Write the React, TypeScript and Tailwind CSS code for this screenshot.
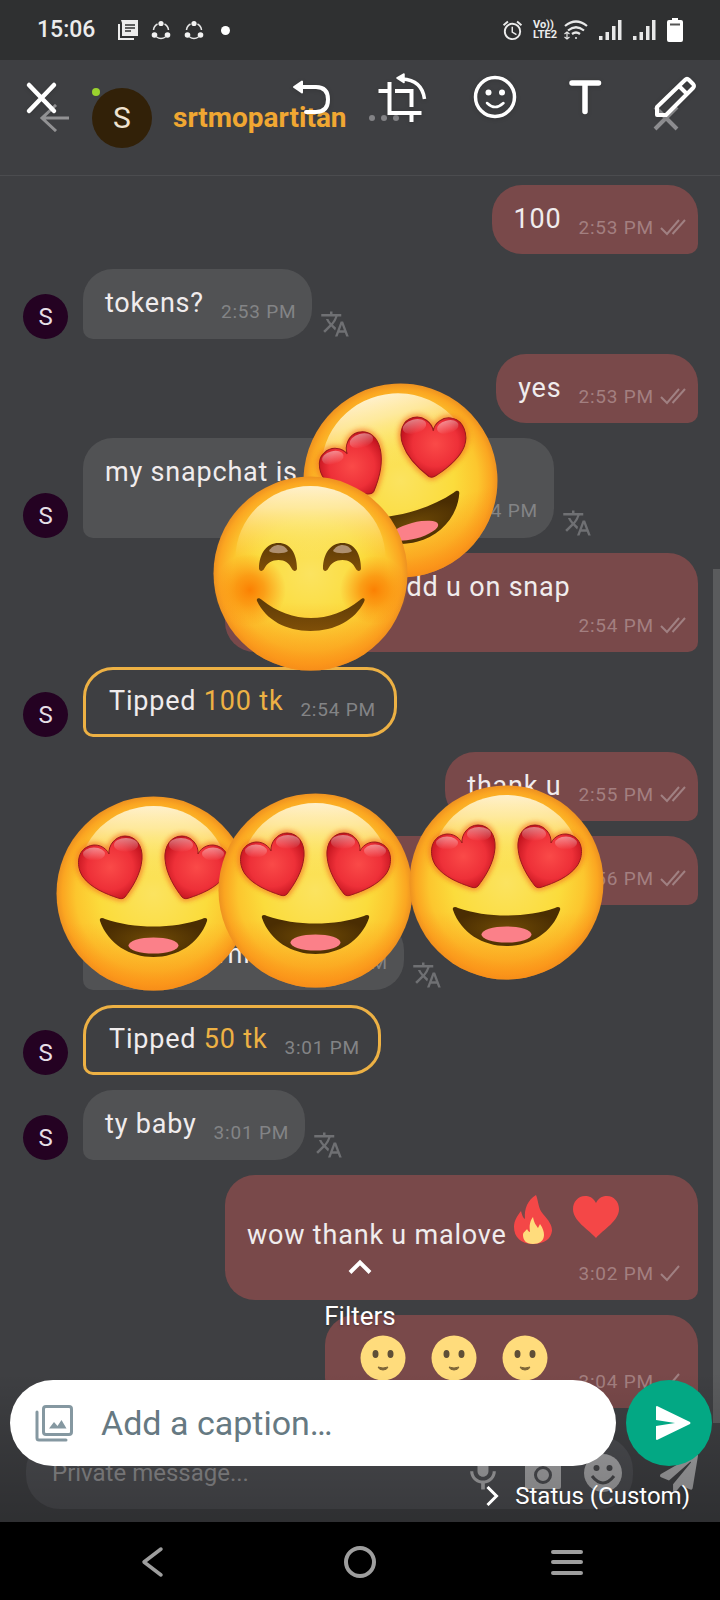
import React from 'react';
import { MdAlarm, MdMic, MdTranslate } from 'react-icons/md';
import { FaPaperPlane } from 'react-icons/fa';

type Kind = 'in' | 'out' | 'tip';

interface Message {
  id: number;
  kind: Kind;
  time: string;
  text?: React.ReactNode;
  avatar?: boolean;
  checks?: 1 | 2;
  // time goes on its own line under the text
  stacked?: boolean;
  className?: string;
}

const Flame = () => (
  <svg width="40" height="50" viewBox="0 0 40 50">
    <path
      d="M23 0C26 8 25 13 30 19C36 26 39 30 39 36C38 44 31 49 20 49C8 49 1 42 1 32C1 25 5 20 8 16C9 20 10 23 12 24C11 13 15 5 23 0Z"
      fill="#f44747"
    />
    <path
      d="M20 22C21 28 23 30 25 33L27 29C30 33 31 37 31 40C31 46 26 49 20 49C13 49 10 45 10 40C10 37 13 36 14 34C15 36 16 37 17 37C16 30 17 26 20 22Z"
      fill="#ffdc7c"
    />
  </svg>
);

const RedHeart = () => (
  <svg width="46" height="44" viewBox="0 0 46 44">
    <path
      d="M23 8C26 2 30 1 34 1C41 1 46 7 46 14C46 26 31 34 23 43C15 34 0 26 0 14C0 7 5 1 12 1C16 1 20 2 23 8Z"
      fill="#f44747"
    />
  </svg>
);

const FlatSmile = () => (
  <svg width="46" height="46" viewBox="0 0 46 46">
    <circle cx="23" cy="23" r="22.5" fill="#ffdc7c" />
    <ellipse cx="15.500" cy="19" rx="3" ry="4" fill="#5f4f37" />
    <ellipse cx="30.500" cy="19" rx="3" ry="4" fill="#5f4f37" />
    <path d="M18 32Q23 34 28 32Q27 35 23 35Q19 35 18 32Z" fill="#7d6537" stroke="#7d6537" />
  </svg>
);

const MESSAGES: Message[] = [
  { id: 1, kind: 'out', text: '100', time: '2:53 PM', checks: 2 },
  { id: 2, kind: 'in', text: 'tokens?', time: '2:53 PM', avatar: true },
  { id: 3, kind: 'out', text: 'yes', time: '2:53 PM', checks: 2 },
  { id: 4, kind: 'in', text: 'my snapchat is', time: '2:54 PM', avatar: true, stacked: true, className: 'w-[471px]' },
  {
    id: 5,
    kind: 'out',
    text: <span className="pl-36">add u on snap</span>,
    time: '2:54 PM',
    checks: 2,
    stacked: true,
    className: 'w-[473px]',
  },
  {
    id: 6,
    kind: 'tip',
    text: <>Tipped <span className="text-[#edb144]">100 tk</span></>,
    time: '2:54 PM',
    avatar: true,
  },
  { id: 7, kind: 'out', text: 'thank u', time: '2:55 PM', checks: 2 },
  { id: 8, kind: 'out', time: '2:56 PM', checks: 2, className: 'w-[390px]' },
  { id: 9, kind: 'in', text: 'good morning', time: '2:59 PM', className: 'w-[321px]' },
  {
    id: 10,
    kind: 'tip',
    text: <>Tipped <span className="text-[#edb144]">50 tk</span></>,
    time: '3:01 PM',
    avatar: true,
  },
  { id: 11, kind: 'in', text: 'ty baby', time: '3:01 PM', avatar: true },
  {
    id: 12,
    kind: 'out',
    text: (
      <span className="flex items-end">
        wow thank u malove
        <span className="flex gap-5 pl-1.5 pt-0.5 pb-1.5">
          <Flame />
          <RedHeart />
        </span>
      </span>
    ),
    time: '3:02 PM',
    checks: 1,
    stacked: true,
    className: 'w-[473px]',
  },
  {
    id: 13,
    kind: 'out',
    text: (
      <span className="flex gap-[25px] px-[13px] pt-0.5 pb-2">
        <FlatSmile />
        <FlatSmile />
        <FlatSmile />
      </span>
    ),
    time: '3:04 PM',
    checks: 1,
  },
];

const Checks = ({ count }: { count: 1 | 2 }) => (
  <svg width="26" height="24" viewBox="0 0 26 24" fill="none" stroke="#a08082" strokeWidth="2">
    <path d="M1 12L7 18L19 4" />
    {count === 2 && <path d="M12.500 18L25 4" />}
  </svg>
);

const bubbleStyles: Record<Kind, string> = {
  in: 'bg-[#515254] rounded-[30px] rounded-bl-[10px] pt-[18px] pb-[15px] pl-[22px] pr-4',
  out: 'bg-[#79494a] rounded-[30px] rounded-br-[10px] pt-[18px] pb-3.5 pl-[22px] pr-3',
  tip: 'border-3 border-[#edb144] rounded-[30px] rounded-bl-[10px] pt-[15px] pb-3 pl-[23px] pr-[18px]',
};

const MessageRow = ({ message }: { message: Message }) => {
  const { kind, text, time, avatar, checks, stacked, className } = message;
  const layout = stacked ? 'flex-col' : 'items-end justify-between gap-[17px]';
  return (
    <li className={`flex items-end ${kind === 'out' ? 'justify-end' : ''}`}>
      {kind !== 'out' && (
        <div className="w-[60px] shrink-0">
          {avatar && (
            <div className="flex size-[45px] items-center justify-center rounded-full bg-[#240222] text-[24px] text-[#e6dfe6]">
              S
            </div>
          )}
        </div>
      )}
      <div className={`flex tracking-wider ${layout} ${bubbleStyles[kind]} ${className ?? ''}`}>
        <div className="min-h-8 mb-[5px] text-[27px] leading-8 text-[#f0eced] whitespace-nowrap">{text}</div>
        <div
          className={`flex gap-1.5 self-end text-[19px] leading-6 whitespace-nowrap ${
            kind === 'out' ? 'text-[#a37f80]' : 'text-[#838486]'
          } ${stacked ? 'mt-1.5' : 'ml-auto'}`}
        >
          <span>{time}</span>
          {checks && <Checks count={checks} />}
        </div>
      </div>
      {kind === 'in' && (
        <button aria-label="Translate" className="ml-2 text-[#6f7073]">
          <MdTranslate size={30} />
        </button>
      )}
    </li>
  );
};

/* ---------- Stickers ---------- */

const HEART =
  'M53 58C52 50 59 40 69 40C80 40 87 50 86 63C85 78 76 92 69 101C67 103 65 103 62 102C50 98 35 92 27 81C20 71 21 56 31 51C40 46 50 51 53 58Z';

const StickerDefs = () => (
  <svg className="absolute size-0" aria-hidden="true">
    <defs>
      <radialGradient id="face" cx="0.5" cy="0.5" r="0.5">
        <stop offset="0" stopColor="#fbe360" />
        <stop offset="0.55" stopColor="#fbdc3c" />
        <stop offset="0.8" stopColor="#fcc62e" />
        <stop offset="0.94" stopColor="#fba621" />
        <stop offset="1" stopColor="#ee9220" />
      </radialGradient>
      <linearGradient id="warm" x1="0" y1="0" x2="0" y2="1">
        <stop offset="0.65" stopColor="#fb9016" stopOpacity="0" />
        <stop offset="1" stopColor="#fb8c16" stopOpacity="0.7" />
      </linearGradient>
      <linearGradient id="shine" x1="0" y1="0" x2="0" y2="1">
        <stop offset="0" stopColor="#fff4d4" stopOpacity="0.95" />
        <stop offset="0.3" stopColor="#fff0b8" stopOpacity="0.8" />
        <stop offset="0.75" stopColor="#fdeb8a" stopOpacity="0.3" />
        <stop offset="1" stopColor="#fdeb8a" stopOpacity="0" />
      </linearGradient>
      <radialGradient id="heart" cx="0.5" cy="0.5" r="0.55">
        <stop offset="0" stopColor="#fa4a48" />
        <stop offset="0.65" stopColor="#ee3038" />
        <stop offset="1" stopColor="#c4141f" />
      </radialGradient>
      <linearGradient id="gloss" x1="0" y1="0" x2="0" y2="1">
        <stop offset="0" stopColor="#fff" stopOpacity="0.45" />
        <stop offset="1" stopColor="#fff" stopOpacity="0" />
      </linearGradient>
      <radialGradient id="mouth" cx="0.5" cy="0.55" r="0.5">
        <stop offset="0" stopColor="#6e4a06" />
        <stop offset="1" stopColor="#4a2d02" />
      </radialGradient>
      <linearGradient id="brown" x1="0" y1="0" x2="0" y2="1">
        <stop offset="0" stopColor="#5d3a06" />
        <stop offset="1" stopColor="#7f4f08" />
      </linearGradient>
      <radialGradient id="cheek">
        <stop offset="0" stopColor="#fb7c00" stopOpacity="0.95" />
        <stop offset="0.4" stopColor="#fb8406" stopOpacity="0.7" />
        <stop offset="1" stopColor="#fb8c10" stopOpacity="0" />
      </radialGradient>
      <filter id="glow" x="-20%" y="-20%" width="140%" height="140%">
        <feGaussianBlur stdDeviation="2.500" />
      </filter>
    </defs>
  </svg>
);

const Face = () => (
  <>
    <circle cx="97.500" cy="97.500" r="97" fill="url(#face)" />
    <circle cx="97.500" cy="97.500" r="97" fill="url(#warm)" />
    <path d="M22.500 82A75 72 0 0 1 172.500 82Z" fill="url(#shine)" />
  </>
);

const HeartEye = () => (
  <>
    <path d={HEART} fill="none" stroke="#f4641c" strokeWidth="5" opacity="0.7" filter="url(#glow)" />
    <path d={HEART} fill="url(#heart)" stroke="#9c1a1c" strokeWidth="1" />
    <ellipse cx="70" cy="49" rx="12" ry="7" fill="url(#gloss)" />
    <ellipse cx="38" cy="58" rx="11" ry="6.500" fill="url(#gloss)" />
  </>
);

const HeartEyes = () => (
  <svg viewBox="0 0 195 195" className="size-full">
    <Face />
    <HeartEye />
    <g transform="matrix(-1 0 0 1 195 0)">
      <HeartEye />
    </g>
    <path
      d="M44 125C43 122 46 121 49 123C78 133 117 133 146 123C149 121 152 122 151 125C143 148 121 161 97.500 161C74 161 52 148 44 125Z"
      fill="url(#mouth)"
    />
    <ellipse cx="97.500" cy="149.500" rx="25" ry="8" fill="#fb8089" />
  </svg>
);

const Blush = () => (
  <svg viewBox="0 0 195 195" className="size-full">
    <Face />
    <circle cx="37" cy="114" r="36" fill="url(#cheek)" />
    <circle cx="161" cy="114" r="34" fill="url(#cheek)" />
    {[46, 110].map((x) => (
      <g key={x} transform={`translate(${x} 67)`}>
        <path
          d="M0 26C0 10 8 0 19.500 0C31 0 38 10 38 26C37 29 34 28 33 26C30 20 26 17 19.500 17C13 17 8 20 5 26C4 28 1 29 0 26Z"
          fill="url(#brown)"
        />
        <path d="M10 8C12 4 16 2 19.500 2C24 2 27 4 29 8C26 11 13 11 10 8Z" fill="#c0a48a" opacity="0.8" />
      </g>
    ))}
    <path
      d="M44 125C43 122 46 121 49 124C79 148 117 148 147 124C150 121 153 122 151 126C142 144 122 155 97.500 155C73 155 53 144 44 125Z"
      fill="url(#brown)"
    />
  </svg>
);

const Stickers = () => (
  <div className="pointer-events-none absolute inset-0" aria-hidden="true">
    <StickerDefs />
    <div className="absolute left-[303px] top-[383px] size-[195px] -rotate-15"><HeartEyes /></div>
    <div className="absolute left-[213px] top-[476px] size-[195px]"><Blush /></div>
    <div className="absolute left-[56px] top-[796px] size-[195px]"><HeartEyes /></div>
    <div className="absolute left-[218px] top-[793px] size-[195px]"><HeartEyes /></div>
    <div className="absolute left-[409px] top-[785px] size-[195px]"><HeartEyes /></div>
  </div>
);

/* ---------- Status bar ---------- */

const ShareRing = () => (
  <svg width="20" height="20" viewBox="0 0 20 20" fill="none" stroke="#e6e6e6" strokeWidth="1.500">
    <path d="M6.500 4A7.500 7.500 0 0 0 2.500 10M13.500 4A7.500 7.500 0 0 1 17.500 10M5.500 17A8 8 0 0 0 14.500 17" />
    <g fill="#f2f2f2" stroke="none">
      <circle cx="10" cy="3.500" r="2.600" />
      <circle cx="3.500" cy="15" r="2.800" />
      <circle cx="16.500" cy="15" r="2.800" />
    </g>
  </svg>
);

const Signal = () => (
  <svg width="23" height="20" viewBox="0 0 23 20" fill="#e8e8e8">
    <rect x="0" y="16" width="3.500" height="4" />
    <rect x="6.500" y="12" width="3.500" height="8" />
    <rect x="13" y="6" width="3.500" height="14" />
    <rect x="19" y="0" width="3.500" height="20" />
  </svg>
);

const StatusBar = () => (
  <div className="flex h-15 items-center justify-between bg-[#2f3031] px-[37px] text-[#ececec]">
    <div className="flex items-center gap-[13px]">
      <span className="mr-2.5 text-[23px] font-medium">15:06</span>
      <svg width="20" height="20" viewBox="0 0 20 20">
        <path d="M1 4V19H16" fill="none" stroke="#ececec" strokeWidth="2" />
        <path d="M3 0H20V16H4V3Z" fill="#ececec" />
        <path d="M7 5H17M7 8H17M7 11H13" stroke="#2f3031" strokeWidth="1.500" />
      </svg>
      <ShareRing />
      <ShareRing />
      <span className="ml-1 size-[9px] rounded-full bg-white" />
    </div>
    <div className="flex items-center gap-[11px]">
      <div className="-mr-1 flex items-center gap-[9px]">
        <MdAlarm size={23} />
        <div className="text-[11px] font-bold leading-[10px]">
          <div>Vo))</div>
          <div>LTE2</div>
        </div>
      </div>
      <svg width="24" height="20" viewBox="0 0 24 20" fill="none" stroke="#e8e8e8" strokeWidth="2.200">
        <path d="M1 6Q12 -3 23 6M4 10.500Q12 4 20 10.500M8 14Q12 11 16 14" />
        <circle cx="12" cy="18" r="1" fill="#e8e8e8" stroke="none" />
        <path d="M3 12V19M0.500 14L3 12L5.500 14M0.500 17L3 19L5.500 17" strokeWidth="1.200" />
      </svg>
      <Signal />
      <Signal />
      <svg width="16" height="24" viewBox="0 0 16 24">
        <path d="M5 0H11V2H14Q16 2 16 4V22Q16 24 14 24H2Q0 24 0 22V4Q0 2 2 2H5Z" fill="#fff" />
        <path d="M3 6.500H13" stroke="#555" strokeWidth="2" />
      </svg>
    </div>
  </div>
);

/* ---------- Chat underneath ---------- */

const ChatHeader = () => (
  <header className="flex h-29 items-center border-b border-[#4b4c4f] pl-[39px] pr-10">
    <button aria-label="Back">
      <svg width="30" height="28" viewBox="0 0 30 28" fill="none" stroke="#929294" strokeWidth="3">
        <path d="M30 14H3M17 1L3 14L17 27" />
      </svg>
    </button>
    <div className="relative ml-[23px] flex size-15 items-center justify-center rounded-full bg-[#322108] text-[30px] text-[#efe3d0]">
      S
      <span className="absolute left-0 top-0 size-2 rounded-full bg-[#9ad22e]" />
    </div>
    <h1 className="ml-[21px] text-[28px] font-bold text-[#f0a732]">srtmopartitan</h1>
    <button aria-label="More" className="ml-[22px] flex gap-1.5">
      <span className="size-1.5 rounded-full bg-[#838386]" />
      <span className="size-1.5 rounded-full bg-[#838386]" />
      <span className="size-1.5 rounded-full bg-[#838386]" />
    </button>
    <button aria-label="Close chat" className="ml-auto">
      <svg width="28" height="26" viewBox="0 0 28 26" stroke="#8d8d90" strokeWidth="4">
        <path d="M3 2L25 24M25 2L3 24" />
      </svg>
    </button>
  </header>
);

const Composer = () => (
  <div className="flex items-center pl-[26px] pr-[22px] pt-[13px] pb-[13px] text-[#a3a3a5]">
    <div className="flex h-[73px] flex-1 items-center rounded-[34px] bg-[#4b4c50]">
      <input
        aria-label="Private message"
        placeholder="Private message..."
        className="min-w-0 flex-1 bg-transparent pl-[26px] text-[24px] outline-none placeholder:text-[#8b8b8d]"
      />
      <button aria-label="Voice" className="flex w-15 justify-center"><MdMic size={44} /></button>
      <button aria-label="Camera" className="flex w-15 justify-center">
        <svg width="36" height="32" viewBox="0 0 36 32">
          <path
            fillRule="evenodd"
            d="M2 4H10L13 0H23L26 4H34Q36 4 36 6V30Q36 32 34 32H2Q0 32 0 30V6Q0 4 2 4ZM18 9A9 9 0 1 0 18 27A9 9 0 1 0 18 9ZM18 12A6 6 0 1 1 18 24A6 6 0 1 1 18 12Z"
            fill="currentColor"
          />
        </svg>
      </button>
      <button aria-label="Emoji" className="flex w-15 justify-center">
        <svg width="38" height="38" viewBox="0 0 38 38">
          <circle cx="19" cy="19" r="19" fill="currentColor" />
          <circle cx="12.500" cy="14" r="3" fill="#47484b" />
          <circle cx="25.500" cy="14" r="3" fill="#47484b" />
          <path d="M8 22Q19 36 30 22" fill="none" stroke="#47484b" strokeWidth="3" />
        </svg>
      </button>
    </div>
    <button aria-label="Send message" className="ml-[27px]"><FaPaperPlane size={38} /></button>
  </div>
);

/* ---------- Editor on top ---------- */

const ToolButton = ({ label, children }: { label: string; children: React.ReactNode }) => (
  <button aria-label={label} className="flex w-[91px] justify-center">
    <svg width="56" height="56" viewBox="0 0 56 56" fill="none" stroke="#fff" strokeWidth="4.500" strokeLinecap="round" strokeLinejoin="round">
      {children}
    </svg>
  </button>
);

const Toolbar = () => (
  <div className="absolute inset-x-0 top-[69px] flex justify-between drop-shadow-sm">
    <button aria-label="Close" className="pl-[13px]">
      <svg width="56" height="56" viewBox="0 0 56 56" stroke="#fff" strokeWidth="4.500" strokeLinecap="round">
        <path d="M16 16L41 42M41 16L16 42" />
      </svg>
    </button>
    <div className="flex">
      <ToolButton label="Undo">
        <path d="M18 18H33Q45 18 45 30.500Q45 43 33 43H23" strokeWidth="4" />
        <path d="M11 18L19 12.500V23.500Z" fill="#fff" strokeWidth="2" />
      </ToolButton>
      <ToolButton label="Crop and rotate">
        <path d="M6.500 22H13M15.500 15V44H45.500M23 22H37.500V36M37.500 47V51" strokeLinecap="square" strokeLinejoin="miter" strokeWidth="4" />
        <path d="M28 10Q48 11 50.500 30" strokeLinecap="butt" strokeWidth="3.500" />
        <path d="M23 9L30 5V13.500Z" fill="#fff" strokeWidth="1.500" />
      </ToolButton>
      <ToolButton label="Stickers">
        <circle cx="30" cy="28" r="19.500" strokeWidth="3.500" />
        <circle cx="23.500" cy="23.500" r="3" fill="#fff" stroke="none" />
        <circle cx="37" cy="23.500" r="3" fill="#fff" stroke="none" />
        <path d="M22 34Q30 42 38.500 34" strokeWidth="2.500" />
      </ToolButton>
      <ToolButton label="Text">
        <path d="M16 14H42.500M29 14V42.500" strokeWidth="5.500" />
      </ToolButton>
      <ToolButton label="Draw">
        <path d="M10 46V38L38 11Q40 9 42 11L46 15Q48 17 46 19L19 46ZM32 17L40 25" strokeWidth="4" />
      </ToolButton>
    </div>
  </div>
);

const EditorFooter = () => (
  <div className="absolute inset-x-0 bottom-[79px] flex flex-col text-white">
    <button className="flex flex-col items-center self-center text-[26px] leading-[30px] text-shadow-md">
      <svg width="24" height="24" viewBox="0 0 24 24" className="mb-[22px]" fill="none" stroke="#fff" strokeWidth="4">
        <path d="M2 17.500L12 7.500L22 17.500" />
      </svg>
      Filters
    </button>
    <div className="mt-[49px] flex gap-2.5 pl-2.5 pr-2">
      <div className="flex h-[86px] flex-1 items-center rounded-full bg-white pl-[25px]">
        <button aria-label="Add media">
          <svg width="38" height="38" viewBox="0 0 38 38" fill="none" stroke="#8598a1" strokeWidth="3">
            <rect x="8.500" y="2.500" width="28" height="28" rx="2.500" />
            <path d="M2 8V34Q2 36 4 36H31" strokeLinecap="round" />
            <path d="M14 24.500L19 18L22.500 22L26.500 16L31.500 24.500Z" fill="#8598a1" stroke="none" />
          </svg>
        </button>
        <input
          aria-label="Caption"
          placeholder="Add a caption…"
          className="ml-7 min-w-0 flex-1 bg-transparent text-[34px] outline-none placeholder:text-[#667982]"
        />
      </div>
      <button aria-label="Send" className="flex size-[86px] items-center justify-center rounded-full bg-[#03a884]">
        <svg width="36" height="34" viewBox="0 0 36 34" className="ml-2">
          <path d="M1 1Q1 0 2 0L35 16Q36 17 35 18L2 34Q1 34 1 33V20L20 17L1 14Z" fill="#fff" />
        </svg>
      </button>
    </div>
    <button className="mt-3.5 mb-2.5 mr-[30px] flex items-center gap-4 self-end text-[24px] leading-8 text-shadow-sm">
      <svg width="13" height="20" viewBox="0 0 13 20" fill="none" stroke="#fff" strokeWidth="3">
        <path d="M1.500 1L10.500 10L1.500 19" />
      </svg>
      Status (Custom)
    </button>
  </div>
);

const NavBar = () => (
  <nav className="flex h-[79px] items-center justify-around bg-black px-[49px]">
    <button aria-label="Back">
      <svg width="32" height="32" viewBox="0 0 32 32" fill="none" stroke="#9e9e9e" strokeWidth="3.500" strokeLinecap="round" strokeLinejoin="round">
        <path d="M24 3L7 16L24 29" />
      </svg>
    </button>
    <button aria-label="Home" className="size-8 rounded-full border-4 border-[#9e9e9e]" />
    <button aria-label="Recent apps">
      <svg width="32" height="32" viewBox="0 0 32 32" stroke="#9e9e9e" strokeWidth="4" strokeLinecap="round">
        <path d="M2 6H30M2 16H30M2 27H30" />
      </svg>
    </button>
  </nav>
);

export default function App() {
  return (
    <div className="relative overflow-hidden bg-[#3e3f42] font-[Roboto,sans-serif]">
      <StatusBar />
      <ChatHeader />
      <main className="relative">
        <ul className="flex flex-col gap-[15px] pl-[23px] pr-[22px] pt-[9px] pb-[15px]">
          {MESSAGES.map((message) => (
            <MessageRow key={message.id} message={message} />
          ))}
        </ul>
        <div className="absolute right-0 bottom-0 top-[393px] w-[7px] bg-[#5a5b5d]" />
      </main>
      <Composer />
      <div className="pointer-events-none absolute inset-x-0 bottom-[79px] h-[150px] bg-linear-to-b from-transparent to-black/25" />
      <NavBar />
      <Stickers />
      <Toolbar />
      <EditorFooter />
    </div>
  );
}
